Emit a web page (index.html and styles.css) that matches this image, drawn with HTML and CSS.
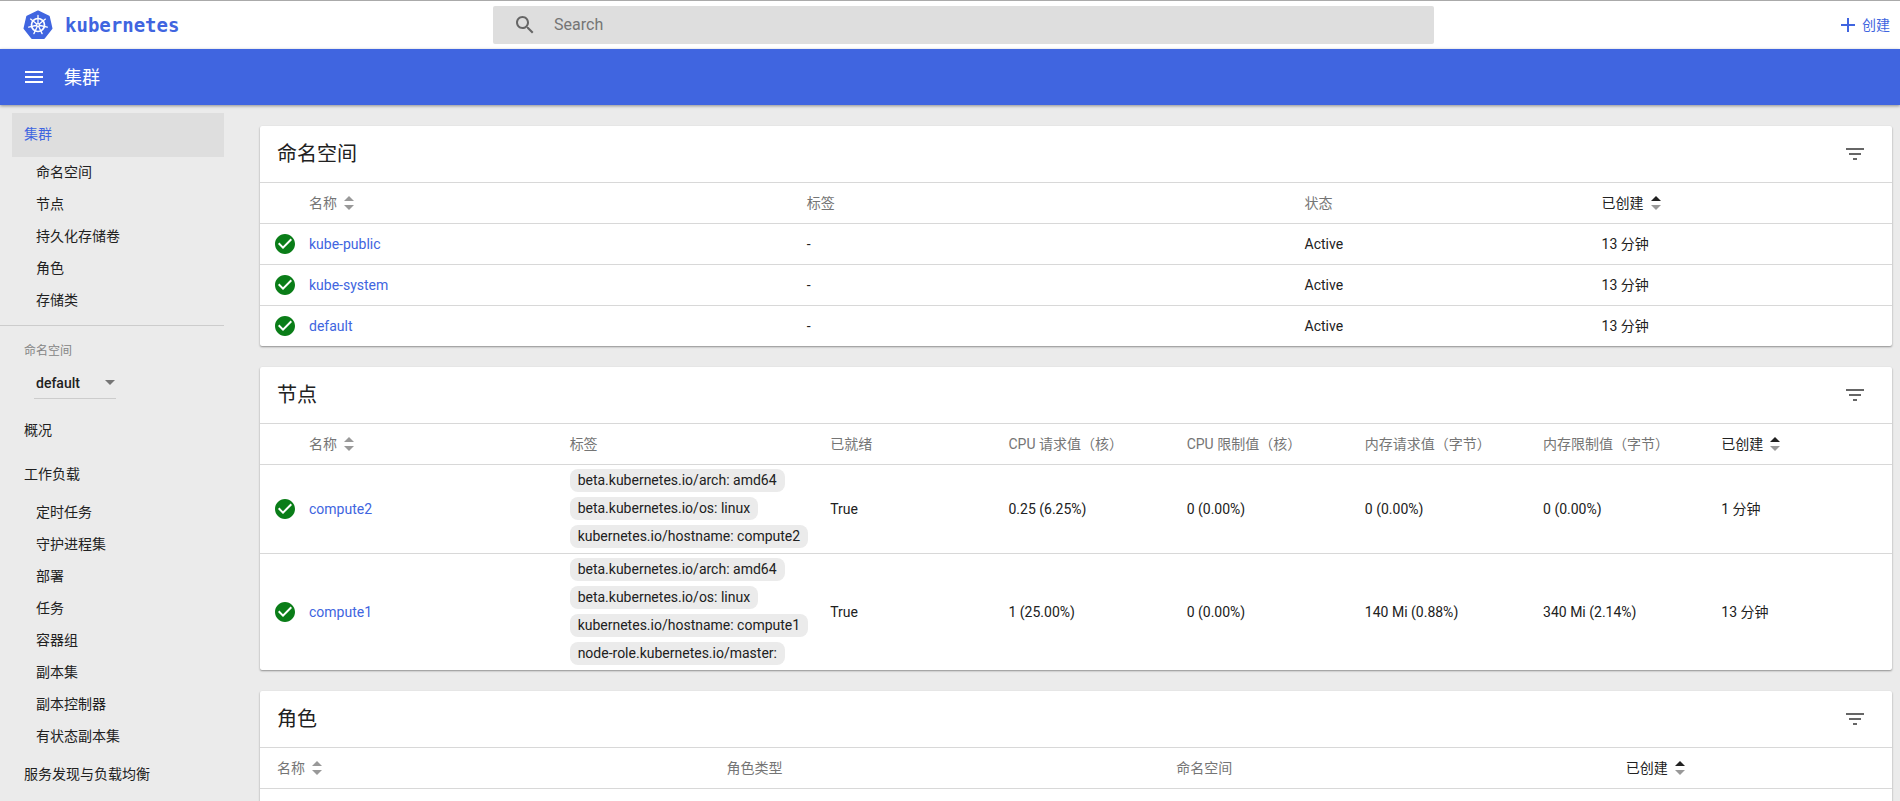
FILE: index.html
```html
<!DOCTYPE html>
<html lang="zh-CN">
<head>
    <meta charset="UTF-8">
    <meta name="viewport" content="width=device-width, initial-scale=1.0">
    <title>集群 - Kubernetes Dashboard</title>
    <link rel="stylesheet" href="styles.css">
</head>
<body>
    <!-- shared icons -->
    <svg class="sprite" width="0" height="0" aria-hidden="true">
        <symbol id="icon-check" viewBox="0 0 24 24">
            <path d="M12 2C6.48 2 2 6.48 2 12s4.480 10 10 10 10-4.480 10-10S17.520 2 12 2zm-2 15l-5-5 1.410-1.410L10 14.170l7.590-7.590L19 8l-9 9z"/>
        </symbol>
        <symbol id="icon-filter" viewBox="0 0 24 24">
            <path d="M10 18h4v-2h-4v2zM3 6v2h18V6H3zm3 7h12v-2H6v2z"/>
        </symbol>
        <symbol id="icon-sort" viewBox="0 0 10 14">
            <path class="up" d="M0 5l5-5 5 5z"/>
            <path class="down" d="M0 9l5 5 5-5z"/>
        </symbol>
    </svg>

    <header class="topbar">
        <a class="brand" href="#">
            <svg class="logo" viewBox="0 0 30 30" aria-hidden="true">
                <path fill="#4065e0" stroke="#4065e0" stroke-width="2" stroke-linejoin="round" d="M15 1.500L25.800 6.700L28.500 18.400L21 28H9L1.500 18.400L4.200 6.700z"/>
                <g fill="none" stroke="#fff" stroke-linecap="round">
                    <circle cx="15" cy="15" r="6.500" stroke-width="1.700"/>
                    <path stroke-width="1.300" d="M15 15V5.500M15 15L22.400 9.100M15 15L24.300 17.100M15 15L19.100 23.600M15 15L10.900 23.600M15 15L5.700 17.100M15 15L7.600 9.100"/>
                </g>
                <circle cx="15" cy="15" r="1.800" fill="#fff"/>
                <circle cx="15" cy="15" r="0.800" fill="#4065e0"/>
            </svg>
            <span class="brand-name">kubernetes</span>
        </a>
        <form class="search">
            <svg class="icon" viewBox="0 0 24 24" aria-hidden="true">
                <path d="M15.500 14h-.790l-.280-.270C15.410 12.590 16 11.110 16 9.500 16 5.910 13.090 3 9.500 3S3 5.910 3 9.500 5.910 16 9.500 16c1.610 0 3.090-.590 4.230-1.570l.270.280v.790l5 4.990L20.490 19l-4.990-5zm-6 0C7.010 14 5 11.990 5 9.500S7.010 5 9.500 5 14 7.010 14 9.500 11.990 14 9.500 14z"/>
            </svg>
            <input type="text" placeholder="Search" aria-label="Search">
        </form>
        <button class="create" type="button">
            <svg class="icon" viewBox="0 0 24 24" aria-hidden="true"><path d="M19 13h-6v6h-2v-6H5v-2h6V5h2v6h6v2z"/></svg>
            创建
        </button>
    </header>

    <div class="actionbar">
        <button class="menu" type="button" aria-label="菜单">
            <svg class="icon" viewBox="0 0 24 24" aria-hidden="true"><path d="M3 18h18v-2H3v2zm0-5h18v-2H3v2zm0-7v2h18V6H3z"/></svg>
        </button>
        <h1>集群</h1>
    </div>

    <div class="layout">
        <nav class="sidebar">
            <a class="nav-item active" href="#">集群</a>
            <a class="nav-sub" href="#">命名空间</a>
            <a class="nav-sub" href="#">节点</a>
            <a class="nav-sub" href="#">持久化存储卷</a>
            <a class="nav-sub" href="#">角色</a>
            <a class="nav-sub" href="#">存储类</a>

            <div class="namespace">
                <label for="namespace">命名空间</label>
                <div class="select-wrap">
                    <select id="namespace">
                        <option>default</option>
                        <option>kube-public</option>
                        <option>kube-system</option>
                    </select>
                </div>
            </div>

            <a class="nav-item" href="#">概况</a>
            <a class="nav-item" href="#">工作负载</a>
            <a class="nav-sub" href="#">定时任务</a>
            <a class="nav-sub" href="#">守护进程集</a>
            <a class="nav-sub" href="#">部署</a>
            <a class="nav-sub" href="#">任务</a>
            <a class="nav-sub" href="#">容器组</a>
            <a class="nav-sub" href="#">副本集</a>
            <a class="nav-sub" href="#">副本控制器</a>
            <a class="nav-sub" href="#">有状态副本集</a>
            <a class="nav-item" href="#">服务发现与负载均衡</a>
        </nav>

        <main class="content">
            <section class="card">
                <div class="card-header">
                    <h2>命名空间</h2>
                    <button class="filter" type="button" aria-label="过滤"><svg class="icon"><use href="#icon-filter"/></svg></button>
                </div>
                <table>
                    <colgroup>
                        <col class="col-status">
                        <col class="ns-wide">
                        <col class="ns-wide">
                        <col class="ns-state">
                        <col>
                    </colgroup>
                    <thead>
                        <tr>
                            <th></th>
                            <th><button class="sort" type="button">名称<svg><use href="#icon-sort"/></svg></button></th>
                            <th>标签</th>
                            <th>状态</th>
                            <th><button class="sort sorted" type="button">已创建<svg><use href="#icon-sort"/></svg></button></th>
                        </tr>
                    </thead>
                    <tbody>
                        <tr>
                            <td class="status"><svg class="icon"><use href="#icon-check"/></svg></td>
                            <td><a href="#">kube-public</a></td>
                            <td>-</td>
                            <td>Active</td>
                            <td>13 分钟</td>
                        </tr>
                        <tr>
                            <td class="status"><svg class="icon"><use href="#icon-check"/></svg></td>
                            <td><a href="#">kube-system</a></td>
                            <td>-</td>
                            <td>Active</td>
                            <td>13 分钟</td>
                        </tr>
                        <tr>
                            <td class="status"><svg class="icon"><use href="#icon-check"/></svg></td>
                            <td><a href="#">default</a></td>
                            <td>-</td>
                            <td>Active</td>
                            <td>13 分钟</td>
                        </tr>
                    </tbody>
                </table>
            </section>

            <section class="card">
                <div class="card-header">
                    <h2>节点</h2>
                    <button class="filter" type="button" aria-label="过滤"><svg class="icon"><use href="#icon-filter"/></svg></button>
                </div>
                <table>
                    <colgroup>
                        <col class="col-status">
                        <col class="node-wide">
                        <col class="node-wide">
                        <col class="node-col">
                        <col class="node-col">
                        <col class="node-col">
                        <col class="node-col">
                        <col class="node-col">
                        <col>
                    </colgroup>
                    <thead>
                        <tr>
                            <th></th>
                            <th><button class="sort" type="button">名称<svg><use href="#icon-sort"/></svg></button></th>
                            <th>标签</th>
                            <th>已就绪</th>
                            <th>CPU 请求值（核）</th>
                            <th>CPU 限制值（核）</th>
                            <th>内存请求值（字节）</th>
                            <th>内存限制值（字节）</th>
                            <th><button class="sort sorted" type="button">已创建<svg><use href="#icon-sort"/></svg></button></th>
                        </tr>
                    </thead>
                    <tbody>
                        <tr>
                            <td class="status"><svg class="icon"><use href="#icon-check"/></svg></td>
                            <td><a href="#">compute2</a></td>
                            <td>
                                <ul class="labels">
                                    <li>beta.kubernetes.io/arch: amd64</li>
                                    <li>beta.kubernetes.io/os: linux</li>
                                    <li>kubernetes.io/hostname: compute2</li>
                                </ul>
                            </td>
                            <td>True</td>
                            <td>0.25 (6.25%)</td>
                            <td>0 (0.00%)</td>
                            <td>0 (0.00%)</td>
                            <td>0 (0.00%)</td>
                            <td>1 分钟</td>
                        </tr>
                        <tr>
                            <td class="status"><svg class="icon"><use href="#icon-check"/></svg></td>
                            <td><a href="#">compute1</a></td>
                            <td>
                                <ul class="labels">
                                    <li>beta.kubernetes.io/arch: amd64</li>
                                    <li>beta.kubernetes.io/os: linux</li>
                                    <li>kubernetes.io/hostname: compute1</li>
                                    <li>node-role.kubernetes.io/master:</li>
                                </ul>
                            </td>
                            <td>True</td>
                            <td>1 (25.00%)</td>
                            <td>0 (0.00%)</td>
                            <td>140 Mi (0.88%)</td>
                            <td>340 Mi (2.14%)</td>
                            <td>13 分钟</td>
                        </tr>
                    </tbody>
                </table>
            </section>

            <section class="card">
                <div class="card-header">
                    <h2>角色</h2>
                    <button class="filter" type="button" aria-label="过滤"><svg class="icon"><use href="#icon-filter"/></svg></button>
                </div>
                <table>
                    <colgroup>
                        <col class="col-indent">
                        <col class="role-col">
                        <col class="role-col">
                        <col class="role-col">
                        <col>
                    </colgroup>
                    <thead>
                        <tr>
                            <th></th>
                            <th><button class="sort" type="button">名称<svg><use href="#icon-sort"/></svg></button></th>
                            <th>角色类型</th>
                            <th>命名空间</th>
                            <th><button class="sort sorted" type="button">已创建<svg><use href="#icon-sort"/></svg></button></th>
                        </tr>
                    </thead>
                    <tbody>
                        <tr>
                            <td colspan="5"></td>
                        </tr>
                    </tbody>
                </table>
            </section>
        </main>
    </div>
</body>
</html>
```
FILE: styles.css
```css
* {
    box-sizing: border-box;
}

body {
    display: flex;
    flex-direction: column;
    height: 100vh;
    margin: 0;
    overflow: hidden;
    background-color: #ebebeb;
    color: #212121;
    font-family: Roboto, "Noto Sans CJK SC", sans-serif;
    font-size: 14px;
    line-height: 20px;
}

a {
    color: #4065e0;
    text-decoration: none;
}

button, input, select {
    padding: 0;
    border: none;
    background: none;
    color: inherit;
    font: inherit;
}

button {
    cursor: pointer;
}

.sprite {
    position: absolute;
}

.icon {
    display: block;
    flex: none;
    width: 24px;
    height: 24px;
    fill: currentColor;
}

/* top bar */
.topbar {
    display: grid;
    grid-template-columns: 25.95% 49.5% 1fr;
    flex: none;
    height: 49px;
    padding: 5px 0;
    border-top: 1px solid #aaa;
    background-color: #fff;
}

.brand {
    display: flex;
    align-items: center;
    gap: 12px;
    padding-left: 23px;
}

.logo {
    width: 30px;
    height: 30px;
}

.brand-name {
    font-family: "DejaVu Sans Mono", monospace;
    font-size: 19px;
    font-weight: bold;
}

.search {
    display: flex;
    align-items: center;
    gap: 17px;
    padding: 0 20px;
    border-radius: 2px;
    background-color: #dedede;
    color: #666;
}

.search input {
    flex: 1;
    font-size: 16px;
    outline: none;
}

.search input::placeholder {
    color: #757575;
    opacity: 1;
}

.create {
    display: flex;
    align-items: center;
    justify-self: end;
    gap: 2px;
    padding-right: 10px;
    color: #4065e0;
}

/* action bar */
.actionbar {
    display: flex;
    align-items: center;
    flex: none;
    gap: 18px;
    height: 56px;
    padding: 0 22px;
    background-color: #4065e0;
    box-shadow: 0 1px 3px rgba(0, 0, 0, 0.4);
    color: #fff;
    z-index: 1;
}

.actionbar h1 {
    margin: 0;
    padding-top: 2px;
    font-size: 18px;
    font-weight: normal;
}

.layout {
    display: flex;
    flex: 1;
    min-height: 0;
}

/* sidebar */
.sidebar {
    flex: none;
    width: 224px;
    padding-top: 8px;
}

.nav-item, .nav-sub {
    display: block;
    color: #212121;
}

.nav-item {
    margin-left: 12px;
    padding: 11px 12px 13px;
}

.nav-sub {
    padding: 5px 36px 7px;
}

.nav-item.active {
    background-color: #dedede;
    color: #4065e0;
}

.namespace {
    margin-top: 8px;
    padding: 16px 24px 10px;
    border-top: 1px solid #ccc;
}

.namespace label {
    display: block;
    color: #858585;
    font-size: 12px;
    line-height: 18px;
}

.select-wrap {
    position: relative;
    width: 82px;
    margin: 7px 0 0 10px;
    border-bottom: 1px solid #ccc;
}

.select-wrap::after {
    content: "";
    position: absolute;
    top: 13px;
    right: 1px;
    border: 5px solid transparent;
    border-top-color: #757575;
    border-bottom: none;
    pointer-events: none;
}

.select-wrap select {
    display: block;
    width: 100%;
    height: 31px;
    padding-left: 2px;
    appearance: none;
    font-weight: 500;
}

/* cards */
.content {
    flex: 1;
    min-width: 0;
    padding: 21px 8px 21px 36px;
    overflow: hidden;
}

.card {
    margin-bottom: 21px;
    border-radius: 2px;
    background-color: #fff;
    box-shadow: 0 1px 2px rgba(0, 0, 0, 0.4);
}

.card-header {
    display: flex;
    align-items: center;
    justify-content: space-between;
    height: 56px;
    padding: 0 25px 0 17px;
}

.card-header h2 {
    margin: 0;
    font-size: 20px;
    font-weight: normal;
}

.filter {
    color: #666;
}

table {
    width: 100%;
    border-collapse: separate;
    border-spacing: 0;
    table-layout: fixed;
}

th, td {
    height: 41px;
    padding: 0;
    border-top: 1px solid #d8d8d8;
    text-align: left;
    white-space: nowrap;
}

th {
    color: #757575;
    font-weight: normal;
}

.col-status {
    width: 49px;
}

.col-indent {
    width: 17px;
}

.ns-wide {
    width: 30.5%;
}

.ns-state {
    width: 18.2%;
}

.node-wide {
    width: 15.97%;
}

.node-col {
    width: 10.92%;
}

.role-col {
    width: 27.55%;
}

.sort {
    display: flex;
    align-items: center;
    gap: 7px;
}

.sort svg {
    width: 10px;
    height: 14px;
    color: #999;
    fill: #999;
}

.sorted {
    color: #212121;
}

/* the ascending arrow is highlighted */
.sorted svg {
    color: #212121;
}

.up {
    fill: currentColor;
}

.status {
    padding-left: 13px;
    color: #0a7d18;
}

.labels {
    display: flex;
    flex-direction: column;
    align-items: flex-start;
    gap: 5px;
    margin: 0;
    padding: 4px 0 5px;
    list-style: none;
}

.labels li {
    padding: 1px 8px 2px;
    border-radius: 8px;
    background-color: #ebebeb;
}
```
